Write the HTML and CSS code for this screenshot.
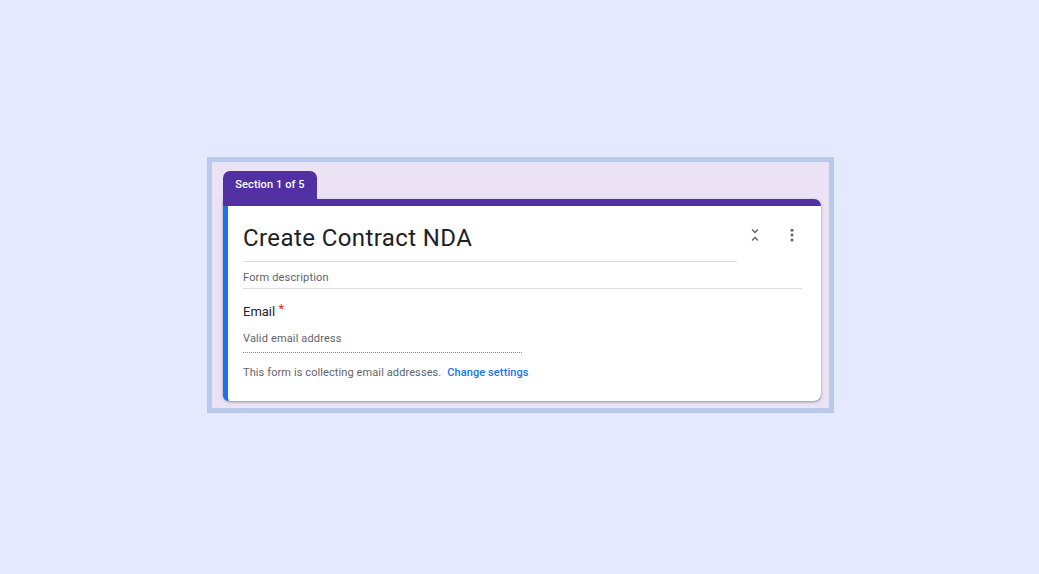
FILE: index.html
```html
<!DOCTYPE html>
<html>
<head>
<meta charset="utf-8">
<link rel="stylesheet" href="styles.css">
</head>
<body>
<div class="frame">
  <div class="tab">Section 1 of 5</div>
  <div class="card">
    <div class="card-body">
      <div class="title-row">
        <div class="title">Create Contract NDA</div>
        <div class="icons">
          <svg class="icon" viewBox="0 0 24 24" width="18" height="18"><path fill="#5f6368" d="M7.41 18.59L8.83 20 12 16.83 15.17 20l1.41-1.41L12 14l-4.59 4.59zm9.18-13.18L15.170 4 12 7.17 8.83 4 7.41 5.41 12 10l4.59-4.59z"/></svg>
          <svg class="icon" viewBox="0 0 24 24" width="18" height="18"><circle cx="12" cy="5.5" r="2" fill="#5f6368"/><circle cx="12" cy="12" r="2" fill="#5f6368"/><circle cx="12" cy="18.5" r="2" fill="#5f6368"/></svg>
        </div>
      </div>
      <div class="desc">Form description</div>
      <div class="label">Email <span class="req">*</span></div>
      <div class="input">Valid email address</div>
      <div class="note">This form is collecting email addresses. <a class="link">Change settings</a></div>
    </div>
  </div>
</div>
</body>
</html>
```
FILE: styles.css
```css
html, body {
  margin: 0;
  padding: 0;
}
body {
  background: #e5e9fd;
  width: 1039px;
  height: 574px;
  font-family: Roboto, "Liberation Sans", Arial, sans-serif;
  overflow: hidden;
}
.frame {
  box-sizing: border-box;
  margin: 157px 0 0 207px;
  width: 627px;
  height: 256px;
  border: 5px solid #b9c9e9;
  background: #ebe3f4;
  padding: 9px 8px 0 11px;
}
.tab {
  display: inline-block;
  width: 94px;
  height: 28px;
  line-height: 28px;
  background: #5030a3;
  color: #fff;
  font-size: 11px;
  font-weight: 500;
  letter-spacing: 0.1px;
  text-align: center;
  border-radius: 7px 7px 0 0;
  vertical-align: top;
}
.card {
  background: #5030a3;
  border-radius: 0 7px 7px 7px;
  padding-top: 7px;
  width: 598px;
  box-shadow: 0 1px 2px rgba(60,64,67,0.35), 0 1px 3px 1px rgba(60,64,67,0.12);
}
.card-body {
  background: #fff;
  border-left: 5px solid #1a73e8;
  border-radius: 0 0 7px 6px;
  padding: 17px 19px 20px 15px;
}
.title-row {
  display: flex;
  align-items: flex-start;
}
.title {
  flex: 1;
  font-size: 24px;
  line-height: 30px;
  letter-spacing: 0.4px;
  color: #202124;
  padding-bottom: 8px;
  border-bottom: 1px solid #dadce0;
}
.icons {
  display: flex;
  gap: 19px;
  margin: 3px 1px 0 9px;
}
.icon {
  display: block;
}
.desc {
  margin-top: 8px;
  font-size: 11px;
  line-height: 16px;
  letter-spacing: 0.17px;
  color: #5f6368;
  padding-bottom: 2px;
  border-bottom: 1px solid #dadce0;
}
.label {
  margin-top: 14px;
  font-size: 13px;
  line-height: 18px;
  color: #202124;
}
.req {
  color: #d93025;
  font-size: 13px;
  vertical-align: 3px;
  line-height: 0;
}
.input {
  margin-top: 10px;
  width: 279px;
  font-size: 11px;
  line-height: 16px;
  letter-spacing: 0.15px;
  color: #5f6368;
  padding-bottom: 5px;
  border-bottom: 1px dotted #80868b;
}
.note {
  margin-top: 12px;
  font-size: 11px;
  line-height: 16px;
  letter-spacing: 0.1px;
  color: #5f6368;
}
.link {
  color: #1a73e8;
  font-weight: 500;
  margin-left: 3px;
}
```
